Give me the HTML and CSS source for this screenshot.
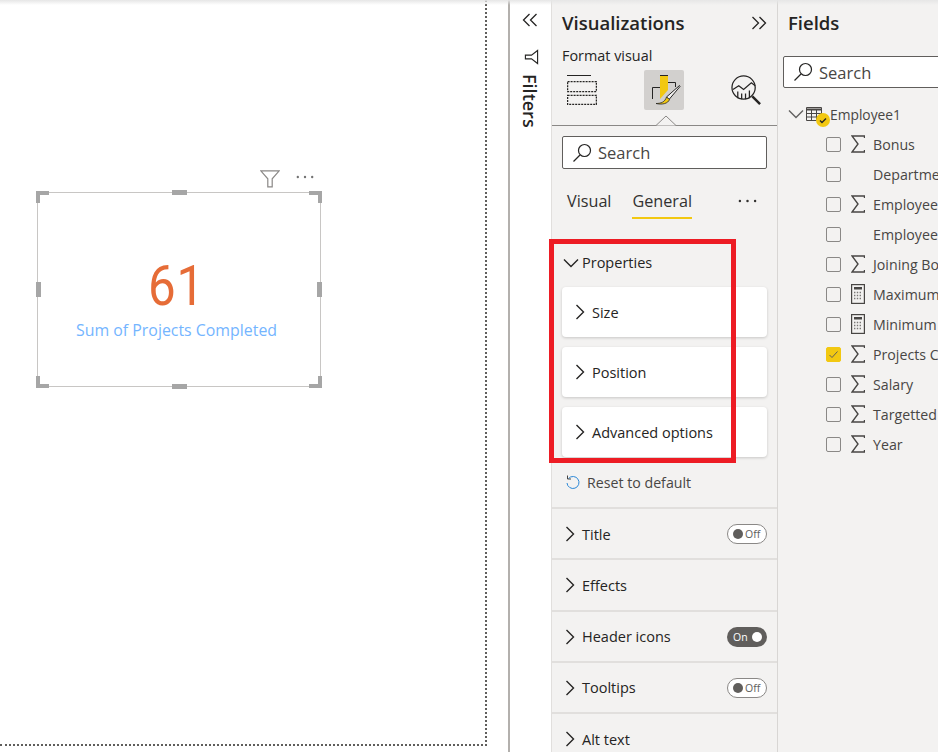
FILE: index.html
```html
<!DOCTYPE html>
<html lang="en">
<head>
<meta charset="utf-8">
<title>Format visual</title>
<link rel="stylesheet" href="styles.css">
</head>
<body>
<svg class="defs" aria-hidden="true">
  <symbol id="chev-r" viewBox="0 0 10 16"><path d="M1.5 1l7 7-7 7" fill="none" stroke="#252423" stroke-width="1.4"/></symbol>
  <symbol id="chev-d" viewBox="0 0 16 10"><path d="M1 1.5l7 7 7-7" fill="none" stroke="#252423" stroke-width="1.4"/></symbol>
  <symbol id="mag" viewBox="0 0 20 20"><circle cx="12.5" cy="7.5" r="6" fill="none" stroke="#252423" stroke-width="1.2"/><path d="M8 12L1.5 18.5" stroke="#252423" stroke-width="1.3"/></symbol>
  <symbol id="sigma" viewBox="0 0 14 18"><path d="M13.5 3V1H1l6 8-6 8h12.500v-2" fill="none" stroke="#484644" stroke-width="1.400"/></symbol>
  <symbol id="calc" viewBox="0 0 14 20"><rect x=".6" y=".6" width="12.800" height="18.800" fill="none" stroke="#484644" stroke-width="1.200"/><rect x="3" y="3" width="8" height="2.500" fill="#484644"/><path d="M3 8.500h8M3 11.500h8M3 14.500h8" stroke="#7a7876" stroke-width="1.300" stroke-dasharray="1.400 1.400"/></symbol>
  <symbol id="dots" viewBox="0 0 20 4"><circle cx="2" cy="2" r="1.300"/><circle cx="10" cy="2" r="1.300"/><circle cx="18" cy="2" r="1.300"/></symbol>
</svg>

<div class="app">
  <main class="canvas-area">
    <div class="page">
      <div class="visual-head">
        <svg class="filter-ic" viewBox="0 0 20 18"><path d="M.8.800h18.400l-7 8v8h-4.400v-8z" fill="none" stroke="#8a8886" stroke-width="1.200"/></svg>
        <svg class="dots-grey"><use href="#dots"/></svg>
      </div>
      <section class="visual">
        <i class="h tl"></i><i class="h tr"></i><i class="h bl"></i><i class="h br"></i>
        <i class="m mt"></i><i class="m mb"></i><i class="m ml"></i><i class="m mr"></i>
        <div class="value">61</div>
        <div class="caption">Sum of Projects Completed</div>
      </section>
    </div>
  </main>

  <aside class="filters">
    <svg class="dbl" viewBox="0 0 16 14"><path d="M7.500 1L1.500 7l6 6M14.500 1l-6 6 6 6" fill="none" stroke="#252423" stroke-width="1.300"/></svg>
    <svg class="filter-side" viewBox="0 0 16 16"><path d="M14.500 1v14l-6.500-5H1.500v-4H8z" fill="none" stroke="#252423" stroke-width="1.200"/></svg>
    <div class="filters-label">Filters</div>
  </aside>

  <section class="viz">
    <header class="pane-title">
      <h2>Visualizations</h2>
      <svg class="dbl" viewBox="0 0 16 14"><path d="M1.500 1l6 6-6 6M8.500 1l6 6-6 6" fill="none" stroke="#252423" stroke-width="1.300"/></svg>
    </header>
    <div class="subtitle">Format visual</div>
    <div class="icon-tabs">
      <svg class="ic-fields" viewBox="0 0 30 30"><path d="M0 .5h24" stroke="#252423"/><path d="M.6 6.600h28.800v10H.6zM.6 20.400h28.800v9H.6z" fill="none" stroke="#252423" stroke-width="1.300" stroke-dasharray="2 1"/></svg>
      <div class="ic-sel">
        <svg viewBox="0 0 40 40" width="40" height="40"><path d="M16 6h8v14l-8 9z" fill="#f2c811"/><path d="M16 5.500h8M8.500 29V17.500H16M24 12.500h7.500V17" fill="none" stroke="#252423" stroke-width="1"/><path d="M35.500 15.500L22.500 27l2.500 2.500L36 16.500z" fill="#f3f2f1" stroke="#252423" stroke-width="1"/><path d="M12 33.500c5 0 9-1.500 10.500-6.500l3 2.500c-1.500 4-7 5.500-13.500 4z" fill="#f2c811" stroke="#252423" stroke-width=".8"/></svg>
      </div>
      <svg class="ic-analytics" viewBox="0 0 32 32"><circle cx="13" cy="13" r="12" fill="none" stroke="#252423" stroke-width="1.300"/><path d="M2 15l6-4 5 4 8-7 4 3" fill="none" stroke="#252423" stroke-width="1.300"/><path d="M7 17v7M11 19v6M15 19v6M19 16v8" stroke="#252423" stroke-width="1.300"/><path d="M22 22l8 8" stroke="#252423" stroke-width="2.600"/></svg>
    </div>
    <div class="tab-rule"><svg class="notch" viewBox="0 0 22 11"><path d="M0 10.500h1L11 1l10 9.500h1" fill="#f3f2f1" stroke="#8a8886"/></svg></div>
    <div class="search viz-search"><svg class="mag"><use href="#mag"/></svg><span>Search</span></div>
    <nav class="tabs">
      <span class="tab">Visual</span>
      <span class="tab on">General</span>
      <svg class="dots-dark"><use href="#dots"/></svg>
    </nav>
    <div class="props">
      <div class="group-head"><svg class="cd"><use href="#chev-d"/></svg>Properties</div>
      <div class="card"><svg class="cr"><use href="#chev-r"/></svg>Size</div>
      <div class="card"><svg class="cr"><use href="#chev-r"/></svg>Position</div>
      <div class="card"><svg class="cr"><use href="#chev-r"/></svg>Advanced options</div>
      <div class="highlight"></div>
    </div>
    <div class="reset">
      <svg class="reset-ic" viewBox="0 0 16 16"><path d="M3.500 4.500A6 6 0 1 1 2 9" fill="none" stroke="#2b88d8" stroke-width="1"/><path d="M2.500 1.500v3.500H6" fill="none" stroke="#484644" stroke-width="1"/></svg>
      Reset to default
    </div>
    <div class="row"><svg class="cr"><use href="#chev-r"/></svg><span class="row-l">Title</span><span class="tog off"><b></b>Off</span></div>
    <div class="row"><svg class="cr"><use href="#chev-r"/></svg><span class="row-l">Effects</span></div>
    <div class="row"><svg class="cr"><use href="#chev-r"/></svg><span class="row-l">Header icons</span><span class="tog on">On<b></b></span></div>
    <div class="row"><svg class="cr"><use href="#chev-r"/></svg><span class="row-l">Tooltips</span><span class="tog off"><b></b>Off</span></div>
    <div class="row"><svg class="cr"><use href="#chev-r"/></svg><span class="row-l">Alt text</span></div>
  </section>

  <section class="fields">
    <h2 class="fields-title">Fields</h2>
    <div class="search fields-search"><svg class="mag"><use href="#mag"/></svg><span>Search</span></div>
    <div class="table-row">
      <svg class="cd tree"><use href="#chev-d"/></svg>
      <span class="tbl">
        <svg viewBox="0 0 16 14" width="16" height="14"><path d="M.5.500h15v13H.5z" fill="none" stroke="#484644"/><path d="M.5 1.500h15v2H.5z" fill="#484644"/><path d="M.5 6.500h15M.5 10h15M5.500 3v11M10.500 3v11" stroke="#484644"/></svg>
        <i class="dot"><svg viewBox="0 0 14 14"><path d="M4 7.500l2 2 4-4" fill="none" stroke="#252423" stroke-width="1.400"/></svg></i>
      </span>
      <span class="tname">Employee1</span>
    </div>
    <ul class="flist">
      <li><i class="cb"></i><svg class="sig"><use href="#sigma"/></svg><span>Bonus</span></li>
      <li><i class="cb"></i><span class="noic"></span><span>Department</span></li>
      <li><i class="cb"></i><svg class="sig"><use href="#sigma"/></svg><span>Employee Code</span></li>
      <li><i class="cb"></i><span class="noic"></span><span>Employee Name</span></li>
      <li><i class="cb"></i><svg class="sig"><use href="#sigma"/></svg><span>Joining Bonus</span></li>
      <li><i class="cb"></i><svg class="calc"><use href="#calc"/></svg><span>Maximum Bonus</span></li>
      <li><i class="cb"></i><svg class="calc"><use href="#calc"/></svg><span>Minimum Bonus</span></li>
      <li><i class="cb ck"><svg viewBox="0 0 15 15"><path d="M3.500 8l2.500 2.500 5.500-6" fill="none" stroke="#605e5c" stroke-width="1"/></svg></i><svg class="sig"><use href="#sigma"/></svg><span>Projects Completed</span></li>
      <li><i class="cb"></i><svg class="sig"><use href="#sigma"/></svg><span>Salary</span></li>
      <li><i class="cb"></i><svg class="sig"><use href="#sigma"/></svg><span>Targetted Projects</span></li>
      <li><i class="cb"></i><svg class="sig"><use href="#sigma"/></svg><span>Year</span></li>
    </ul>
  </section>
  <div class="top-shade"></div>
</div>
</body>
</html>
```

FILE: styles.css
```css
* { box-sizing: border-box; }
html, body { margin: 0; padding: 0; height: 100%; }
body {
  background: #fff;
  font-family: "Open Sans", "Noto Sans", "Liberation Sans", sans-serif;
  color: #252423;
  overflow: hidden;
}
.defs { position: absolute; width: 0; height: 0; }
.app { position: relative; display: flex; width: 938px; height: 752px; overflow: hidden; }
.top-shade { position: absolute; left: 0; top: 0; right: 0; height: 5px; background: linear-gradient(#e6e6e6, rgba(240,240,240,0)); }

/* canvas */
.canvas-area { width: 510px; flex: none; border-right: 2px solid #b3b0ad; background: #fff; }
.page { width: 487px; height: 746px; border-right: 2px dotted #605e5c; border-bottom: 2px dotted #605e5c; padding: 168px 0 0 37px; }
.visual-head { width: 284px; height: 24px; display: flex; justify-content: flex-end; gap: 16px; padding-right: 7px; }
.filter-ic { width: 20px; height: 18px; margin-top: 2px; }
.dots-grey { width: 18px; height: 4px; margin-top: 7px; fill: #737373; }
.visual { position: relative; width: 284px; height: 195px; border: 1px solid #c8c6c4; display: flex; flex-direction: column; align-items: center; padding: 61px 5px 0 0; }
.value { font-family: "Roboto", sans-serif; font-weight: 400; font-size: 56px; line-height: 65px; letter-spacing: 1px; color: #e66c37; transform: scaleX(.88); }
.caption { font-size: 15.900px; font-weight: 400; line-height: 22px; color: #74b5ff; }
.h { position: absolute; width: 13px; height: 12px; border: 0 solid #a6a6a6; }
.tl { left: -2px; top: -2px; border-width: 4px 0 0 4px; }
.tr { right: -2px; top: -2px; border-width: 4px 4px 0 0; }
.bl { left: -2px; bottom: -2px; border-width: 0 0 4px 4px; }
.br { right: -2px; bottom: -2px; border-width: 0 4px 4px 0; }
.m { position: absolute; background: #a6a6a6; }
.mt, .mb { left: 134px; width: 15px; height: 5px; }
.mt { top: -3px; } .mb { bottom: -3px; }
.ml, .mr { top: 89px; width: 5px; height: 15px; }
.ml { left: -2px; } .mr { right: -2px; }

/* filters rail */
.filters { width: 41px; flex: none; display: flex; flex-direction: column; align-items: center; background: #fff; padding: 13px 1px 0 0; }
.dbl { width: 16px; height: 14px; flex: none; }
.filter-side { width: 15px; height: 16px; margin-top: 22px; margin-left: 2px; }
.filters-label { writing-mode: vertical-rl; font-size: 18px; font-weight: 600; line-height: 18px; margin-top: 9px; }

/* visualizations */
.viz { width: 227px; flex: none; background: #f3f2f1; border-left: 1px solid #e1dfdd; border-right: 1px solid #d8d6d4; display: flex; flex-direction: column; }
.viz > * { flex: none; }
.pane-title { display: flex; align-items: center; justify-content: space-between; height: 46px; padding: 0 10px; }
.pane-title h2 { margin: 0; font-size: 18.500px; font-weight: 600; line-height: 46px; }
.subtitle { height: 20px; padding-left: 10px; font-size: 14.400px; font-weight: 500; line-height: 20px; }
.icon-tabs { height: 40px; margin-top: 4px; display: flex; align-items: center; padding-left: 15px; }
.ic-fields { width: 30px; height: 30px; }
.ic-sel { width: 40px; height: 40px; margin-left: 47px; background: #d2d0ce; border-radius: 2px; }
.ic-sel svg { display: block; }
.ic-analytics { width: 31px; height: 31px; margin-left: 47px; }
.tab-rule { position: relative; height: 16px; border-bottom: 1px solid #8a8886; }
.notch { position: absolute; left: 103px; top: 5px; width: 22px; height: 11px; }
.search { display: flex; align-items: center; background: #fff; border: 1px solid #605e5c; border-radius: 2px; font-size: 16.500px; color: #484644; }
.mag { width: 20px; height: 20px; flex: none; }
.viz-search { width: 205px; height: 33px; margin: 10px 0 0 10px; padding-left: 9px; gap: 6px; }
.tabs { position: relative; display: flex; height: 50px; padding: 20px 0 0 15px; font-size: 16.200px; line-height: 24px; }
.tab { height: 30px; margin-right: 21px; color: #323130; }
.tab.on { font-weight: 500; border-bottom: 2px solid #f2c811; }
.dots-dark { position: absolute; left: 186px; top: 30px; width: 19px; height: 4px; fill: #323130; }

.props { position: relative; margin-top: 30px; }
.group-head { display: flex; align-items: center; height: 27px; padding-left: 11px; font-size: 14.500px; font-weight: 500; gap: 3px; }
.cd { width: 16px; height: 10px; flex: none; }
.cr { width: 10px; height: 16px; flex: none; }
.card { display: flex; align-items: center; height: 50px; margin: 10px 10px 0; padding-left: 13px; gap: 7px; background: #fff; border-radius: 4px; box-shadow: 0 1px 3px rgba(0,0,0,.18); font-size: 14.500px; font-weight: 500; }
.group-head + .card { margin-top: 11px; }
.highlight { position: absolute; left: -3px; top: -10px; width: 187px; height: 224px; border: 5px solid #ed1c24; }
.reset { display: flex; align-items: center; height: 50px; padding-left: 13px; gap: 6px; font-size: 14.200px; color: #484644; }
.reset-ic { width: 16px; height: 16px; flex: none; }
.row { display: flex; align-items: center; height: 51.250px; border-top: 2px solid #e1dfdd; padding: 1px 10px 0 13px; gap: 7px; font-size: 14.500px; font-weight: 500; }
.row-l { flex: 1; }
.tog { display: flex; align-items: center; width: 40px; height: 20px; border-radius: 10px; font-size: 10.500px; line-height: 18px; }
.tog b { width: 10px; height: 10px; border-radius: 50%; flex: none; }
.tog.off { background: #fff; border: 1px solid #8a8886; color: #605e5c; padding-left: 5px; gap: 2px; }
.tog.off b { background: #605e5c; }
.tog.on { background: #605e5c; color: #fff; padding-left: 6px; gap: 4px; }
.tog.on b { background: #fff; }

/* fields */
.fields { width: 160px; flex: none; background: #f3f2f1; overflow: hidden; padding-left: 5px; }
.fields-title { margin: 0; padding-left: 5px; font-size: 18.500px; font-weight: 600; line-height: 46px; height: 46px; }
.fields-search { width: 200px; height: 32px; margin-top: 10px; padding-left: 9px; gap: 6px; }
.table-row { display: flex; align-items: center; height: 24px; margin-top: 14px; padding-left: 5px; font-size: 13.800px; color: #484644; }
.cd.tree { opacity: .7; }
.tbl { position: relative; width: 24px; height: 16px; margin-left: 2px; }
.tname { margin-left: 0; }
.dot { position: absolute; left: 10px; top: 7px; width: 14px; height: 14px; border-radius: 50%; background: #f2c811; }
.dot svg { display: block; }
.flist { list-style: none; margin: 3px 0 0; padding: 0 0 0 43px; width: 400px; }
.flist li { display: flex; align-items: center; height: 30px; font-size: 14.200px; color: #484644; white-space: nowrap; }
.cb { width: 15px; height: 15px; flex: none; border: 1px solid #8a8886; border-radius: 2px; }
.cb.ck { background: #f2c811; border-color: #f2c811; }
.cb.ck svg { display: block; margin: -1px; width: 15px; height: 15px; }
.sig { width: 14px; height: 18px; margin: 0 8px 0 10px; flex: none; }
.calc { width: 14px; height: 20px; margin: 0 8px 0 10px; flex: none; }
.noic { width: 14px; margin: 0 8px 0 10px; flex: none; }
```
